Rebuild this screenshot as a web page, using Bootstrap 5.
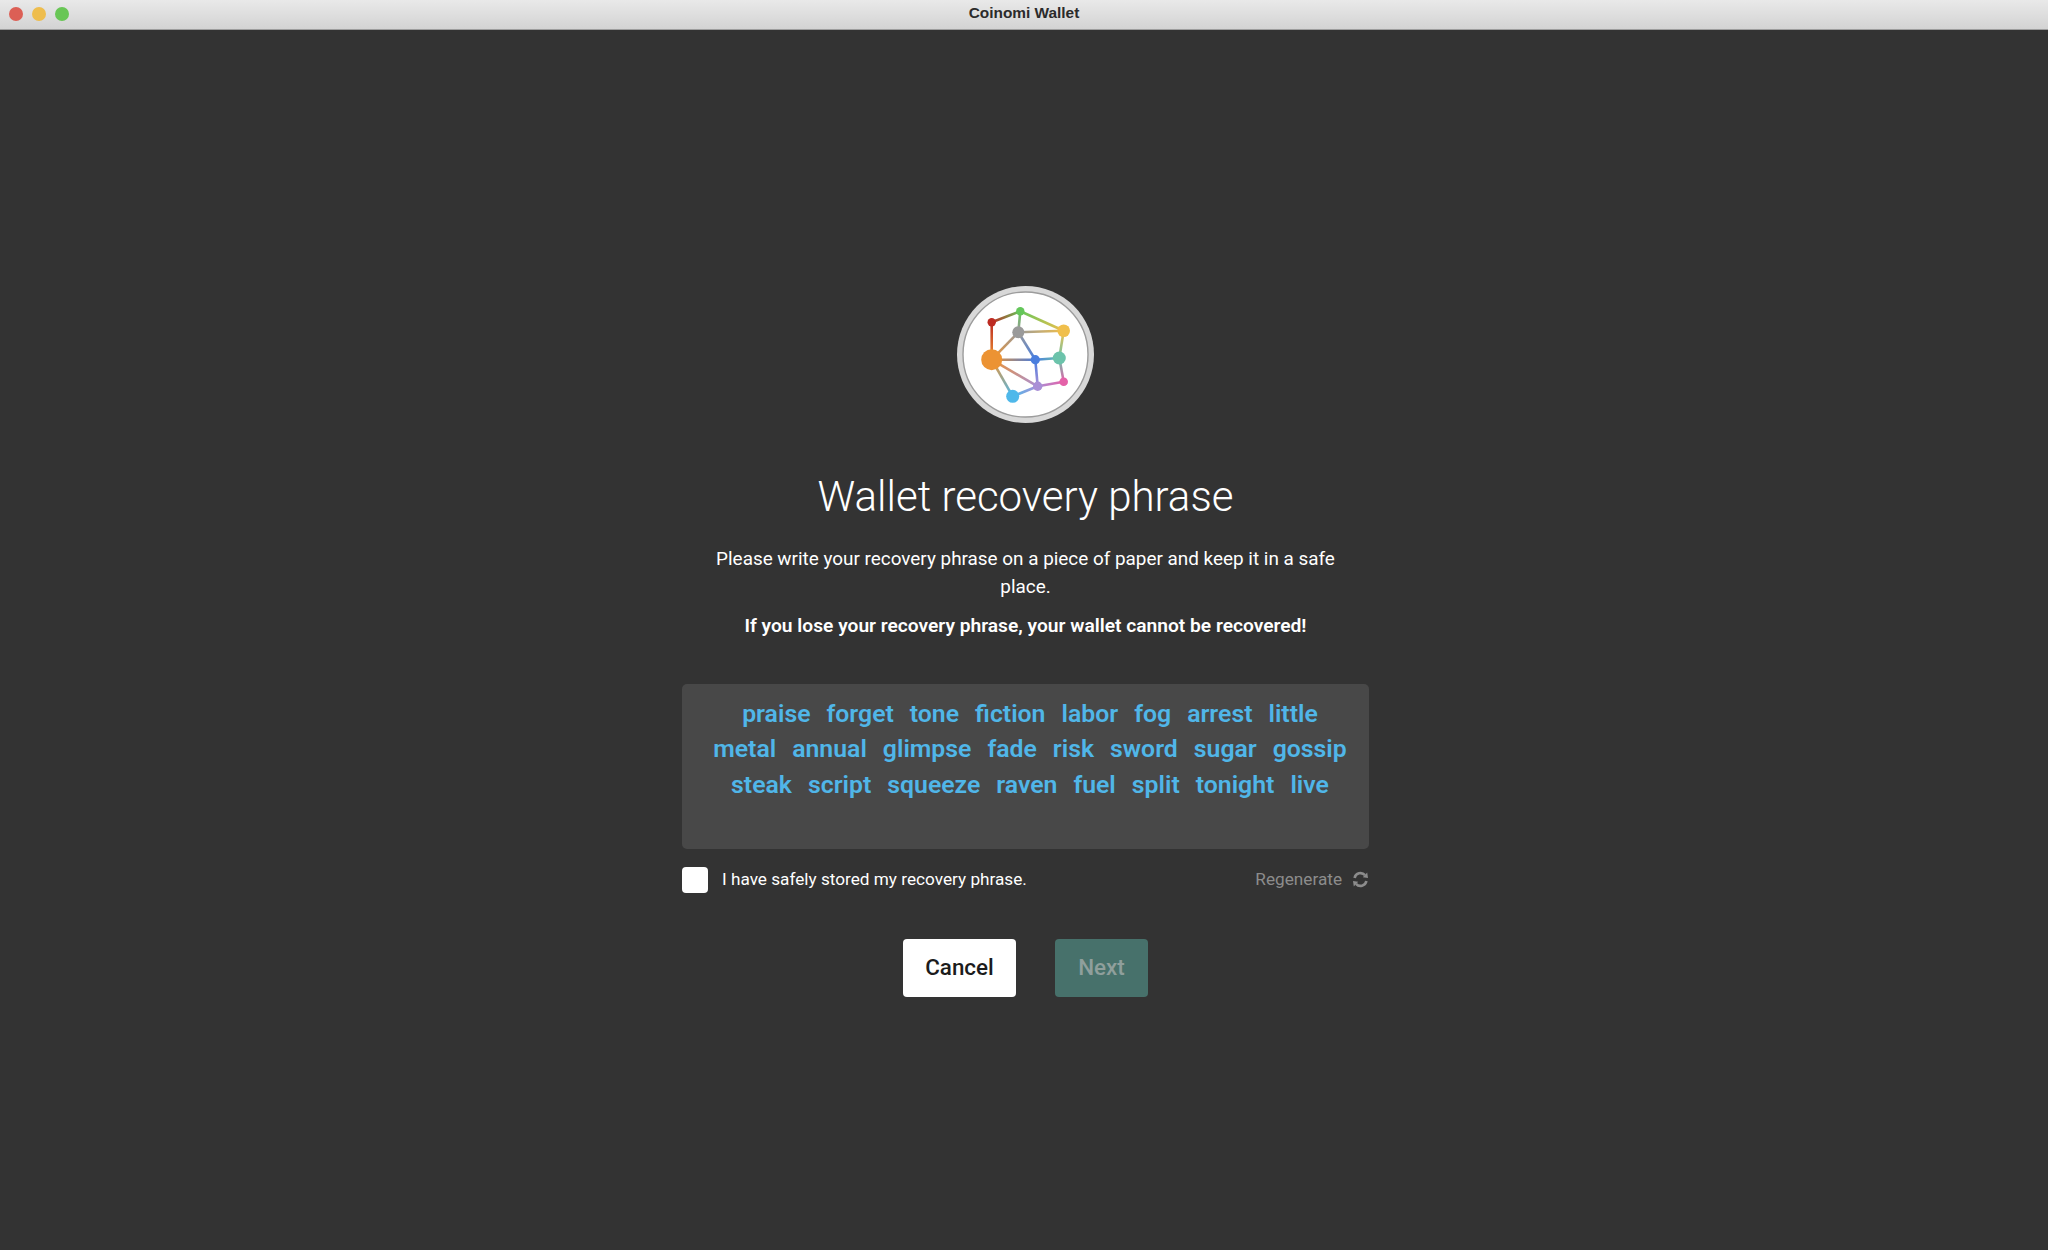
<!DOCTYPE html>
<html lang="en">
<head>
    <meta charset="UTF-8">
    <meta name="viewport" content="width=device-width, initial-scale=1.0">
    <title>Coinomi Wallet</title>
    <link href="https://cdn.jsdelivr.net/npm/bootstrap@5.3.0/dist/css/bootstrap.min.css" rel="stylesheet">
    <style>
        html, body {
            height: 100%;
        }
        body {
            background-color: #333333;
            color: #ffffff;
            font-family: Roboto, "Liberation Sans", sans-serif;
            overflow: hidden;
        }
        .title-bar {
            height: 30px;
            background: linear-gradient(#e9e9e9, #d3d3d3);
            border-bottom: 1px solid #9d9d9d;
            padding-left: 9px;
            padding-bottom: 2px;
            gap: 9px;
        }
        .title-text {
            position: absolute;
            left: 0;
            right: 0;
            top: 3px;
            text-align: center;
            color: #2b2b2b;
            font: bold 15.4px/20px "Liberation Sans", sans-serif;
        }
        .light {
            width: 14px;
            height: 14px;
            border-radius: 50%;
        }
        .setup-page {
            height: 1220px;
            padding-top: 256px;
            padding-left: 3px;
        }
        .setup-column {
            width: 687px;
        }
        .logo-svg {
            width: 137px;
            height: 137px;
            display: block;
        }
        .setup-title {
            font-size: 42px;
            font-weight: 300;
            line-height: 56px;
            margin: 46px 0 0;
        }
        .setup-text {
            width: 640px;
            font-size: 18.9px;
            line-height: 27.5px;
            font-weight: 400;
            margin: 20px 0 0;
        }
        .setup-warning {
            font-size: 19.2px;
            line-height: 27.5px;
            font-weight: 600;
            margin: 12px 0 0;
        }
        .phrase-box {
            height: 165px;
            background-color: #484848;
            border-radius: 5px;
            margin-top: 44px;
            padding: 12px 0 0 9px;
            color: #50b6e8;
            font-size: 24.8px;
            font-weight: 600;
            line-height: 35.5px;
        }
        .stored-row {
            margin-top: 18px;
            height: 26px;
            font-size: 17.2px;
        }
        .stored-check {
            width: 26px;
            height: 26px;
            background-color: #ffffff;
            border-radius: 4px;
            margin-right: 14px;
        }
        .regen-link {
            color: #8c8c8c;
            gap: 10px;
        }
        .wallet-btn {
            height: 58px;
            font-size: 22.4px;
            font-weight: 500;
            border-radius: 4px;
            border: 0;
            padding: 0;
            margin-top: 46px;
        }
        .btn-row {
            gap: 39px;
        }
        .btn-cancel {
            width: 113px;
            background-color: #ffffff;
            color: #1c1c1c;
        }
        .btn-next {
            width: 93px;
            background-color: #47716b;
            color: #8f9f9c;
        }
    </style>
</head>
<body>
    <!-- Window title -->
    <div class="title-bar position-relative d-flex align-items-center">
        <div class="light" style="background-color:#dc5f55"></div>
        <div class="light" style="background-color:#eebd4d"></div>
        <div class="light" style="background-color:#68c655"></div>
        <div class="title-text">Coinomi Wallet</div>
    </div>

    <main class="setup-page d-flex justify-content-center">
        <div class="setup-column d-flex flex-column align-items-center text-center">
            <svg class="logo-svg" viewBox="0 0 137 137">
                <defs>
                    <linearGradient id="e1" gradientUnits="userSpaceOnUse" x1="34.7" y1="36.3" x2="63.3" y2="25.3"><stop offset="0" stop-color="#bd2b22"/><stop offset="1" stop-color="#64c65a"/></linearGradient>
                    <linearGradient id="e2" gradientUnits="userSpaceOnUse" x1="63.3" y1="25.3" x2="106.7" y2="44.7"><stop offset="0" stop-color="#64c65a"/><stop offset="1" stop-color="#f0bf4c"/></linearGradient>
                    <linearGradient id="e3" gradientUnits="userSpaceOnUse" x1="34.7" y1="36.3" x2="34.7" y2="73.7"><stop offset="0" stop-color="#bd2b22"/><stop offset="1" stop-color="#ec9333"/></linearGradient>
                    <linearGradient id="e4" gradientUnits="userSpaceOnUse" x1="63.3" y1="25.3" x2="61.3" y2="46.3"><stop offset="0" stop-color="#64c65a"/><stop offset="1" stop-color="#9a9a9a"/></linearGradient>
                    <linearGradient id="e5" gradientUnits="userSpaceOnUse" x1="61.3" y1="46.3" x2="106.7" y2="44.7"><stop offset="0" stop-color="#9a9a9a"/><stop offset="1" stop-color="#f0bf4c"/></linearGradient>
                    <linearGradient id="e6" gradientUnits="userSpaceOnUse" x1="34.7" y1="73.7" x2="61.3" y2="46.3"><stop offset="0" stop-color="#ec9333"/><stop offset="1" stop-color="#9a9a9a"/></linearGradient>
                    <linearGradient id="e7" gradientUnits="userSpaceOnUse" x1="61.3" y1="46.3" x2="78.3" y2="73.7"><stop offset="0" stop-color="#9a9a9a"/><stop offset="1" stop-color="#4a7ede"/></linearGradient>
                    <linearGradient id="e8" gradientUnits="userSpaceOnUse" x1="106.7" y1="44.7" x2="102.3" y2="72"><stop offset="0" stop-color="#f0bf4c"/><stop offset="1" stop-color="#6cc3ab"/></linearGradient>
                    <linearGradient id="e9" gradientUnits="userSpaceOnUse" x1="34.7" y1="73.7" x2="78.3" y2="73.7"><stop offset="0" stop-color="#ec9333"/><stop offset="1" stop-color="#4a7ede"/></linearGradient>
                    <linearGradient id="e10" gradientUnits="userSpaceOnUse" x1="78.3" y1="73.7" x2="102.3" y2="72"><stop offset="0" stop-color="#4a7ede"/><stop offset="1" stop-color="#6cc3ab"/></linearGradient>
                    <linearGradient id="e11" gradientUnits="userSpaceOnUse" x1="34.7" y1="73.7" x2="80.7" y2="100.3"><stop offset="0" stop-color="#ec9333"/><stop offset="1" stop-color="#a98fd6"/></linearGradient>
                    <linearGradient id="e12" gradientUnits="userSpaceOnUse" x1="34.7" y1="73.7" x2="55.7" y2="110.3"><stop offset="0" stop-color="#ec9333"/><stop offset="1" stop-color="#4fb8ea"/></linearGradient>
                    <linearGradient id="e13" gradientUnits="userSpaceOnUse" x1="78.3" y1="73.7" x2="80.7" y2="100.3"><stop offset="0" stop-color="#4a7ede"/><stop offset="1" stop-color="#a98fd6"/></linearGradient>
                    <linearGradient id="e14" gradientUnits="userSpaceOnUse" x1="102.3" y1="72" x2="106.7" y2="95.7"><stop offset="0" stop-color="#6cc3ab"/><stop offset="1" stop-color="#e461a8"/></linearGradient>
                    <linearGradient id="e15" gradientUnits="userSpaceOnUse" x1="80.7" y1="100.3" x2="106.7" y2="95.7"><stop offset="0" stop-color="#a98fd6"/><stop offset="1" stop-color="#e461a8"/></linearGradient>
                    <linearGradient id="e16" gradientUnits="userSpaceOnUse" x1="80.7" y1="100.3" x2="55.7" y2="110.3"><stop offset="0" stop-color="#a98fd6"/><stop offset="1" stop-color="#4fb8ea"/></linearGradient>
                </defs>
                <circle cx="68.5" cy="68.5" r="68.5" fill="#d8d8d8"/>
                <circle cx="68.5" cy="68.5" r="62.5" fill="#ffffff" stroke="#9c9c9c" stroke-width="1.4"/>
                <g stroke-width="2.6">
                    <line x1="34.7" y1="36.3" x2="63.3" y2="25.3" stroke="url(#e1)"/>
                    <line x1="63.3" y1="25.3" x2="106.7" y2="44.7" stroke="url(#e2)"/>
                    <line x1="34.7" y1="36.3" x2="34.7" y2="73.7" stroke="url(#e3)"/>
                    <line x1="63.3" y1="25.3" x2="61.3" y2="46.3" stroke="url(#e4)"/>
                    <line x1="61.3" y1="46.3" x2="106.7" y2="44.7" stroke="url(#e5)"/>
                    <line x1="34.7" y1="73.7" x2="61.3" y2="46.3" stroke="url(#e6)"/>
                    <line x1="61.3" y1="46.3" x2="78.3" y2="73.7" stroke="url(#e7)"/>
                    <line x1="106.7" y1="44.7" x2="102.3" y2="72" stroke="url(#e8)"/>
                    <line x1="34.7" y1="73.7" x2="78.3" y2="73.7" stroke="url(#e9)"/>
                    <line x1="78.3" y1="73.7" x2="102.3" y2="72" stroke="url(#e10)"/>
                    <line x1="34.7" y1="73.7" x2="80.7" y2="100.3" stroke="url(#e11)"/>
                    <line x1="34.7" y1="73.7" x2="55.7" y2="110.3" stroke="url(#e12)"/>
                    <line x1="78.3" y1="73.7" x2="80.7" y2="100.3" stroke="url(#e13)"/>
                    <line x1="102.3" y1="72" x2="106.7" y2="95.7" stroke="url(#e14)"/>
                    <line x1="80.7" y1="100.3" x2="106.7" y2="95.7" stroke="url(#e15)"/>
                    <line x1="80.7" y1="100.3" x2="55.7" y2="110.3" stroke="url(#e16)"/>
                </g>
                <circle cx="34.7" cy="36.3" r="4.2" fill="#bd2b22"/>
                <circle cx="63.3" cy="25.3" r="4.2" fill="#64c65a"/>
                <circle cx="106.7" cy="44.7" r="6.3" fill="#f0bf4c"/>
                <circle cx="61.3" cy="46.3" r="6" fill="#9a9a9a"/>
                <circle cx="34.7" cy="73.7" r="10.5" fill="#ec9333"/>
                <circle cx="78.3" cy="73.7" r="4.6" fill="#4a7ede"/>
                <circle cx="102.3" cy="72" r="6.5" fill="#6cc3ab"/>
                <circle cx="106.7" cy="95.7" r="4.3" fill="#e461a8"/>
                <circle cx="80.7" cy="100.3" r="4.7" fill="#a98fd6"/>
                <circle cx="55.7" cy="110.3" r="6.5" fill="#4fb8ea"/>
            </svg>

            <h1 class="setup-title">Wallet recovery phrase</h1>
            <p class="setup-text">Please write your recovery phrase on a piece of paper and keep it in a safe place.</p>
            <p class="setup-warning">If you lose your recovery phrase, your wallet cannot be recovered!</p>

            <div class="phrase-box w-100">
                <div class="d-flex justify-content-center gap-3">
                    <span>praise</span><span>forget</span><span>tone</span><span>fiction</span><span>labor</span><span>fog</span><span>arrest</span><span>little</span>
                </div>
                <div class="d-flex justify-content-center gap-3">
                    <span>metal</span><span>annual</span><span>glimpse</span><span>fade</span><span>risk</span><span>sword</span><span>sugar</span><span>gossip</span>
                </div>
                <div class="d-flex justify-content-center gap-3">
                    <span>steak</span><span>script</span><span>squeeze</span><span>raven</span><span>fuel</span><span>split</span><span>tonight</span><span>live</span>
                </div>
            </div>

            <div class="stored-row w-100 d-flex align-items-center justify-content-between">
                <div class="d-flex align-items-center">
                    <div class="stored-check"></div>
                    <span>I have safely stored my recovery phrase.</span>
                </div>
                <div class="regen-link d-flex align-items-center">
                    <span>Regenerate</span>
                    <svg width="17" height="17" viewBox="0 0 17 17" fill="none" stroke="#8c8c8c" stroke-width="2.6">
                        <path d="M2.6 7A6 6 0 0 1 13 4.2"/>
                        <path d="M14.4 10A6 6 0 0 1 4 12.8"/>
                        <path d="M10.8 6.2 16 7 15.2 1.6Z" fill="#8c8c8c" stroke="none"/>
                        <path d="M6.2 10.8 1 10 1.8 15.4Z" fill="#8c8c8c" stroke="none"/>
                    </svg>
                </div>
            </div>

            <div class="btn-row d-flex justify-content-center">
                <button type="button" class="btn wallet-btn btn-cancel">Cancel</button>
                <button type="button" class="btn wallet-btn btn-next">Next</button>
            </div>
        </div>
    </main>

    <script src="https://cdn.jsdelivr.net/npm/bootstrap@5.3.0/dist/js/bootstrap.bundle.min.js"></script>
</body>
</html>
